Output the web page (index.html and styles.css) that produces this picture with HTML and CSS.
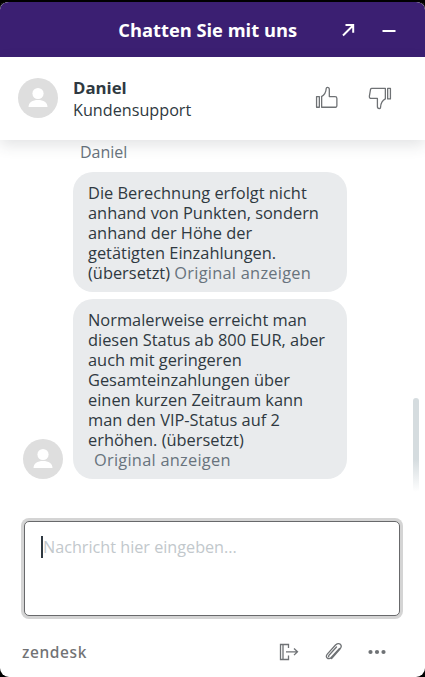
FILE: index.html
```html
<!DOCTYPE html>
<html lang="de">
<head>
<meta charset="utf-8">
<title>Chat</title>
<link rel="stylesheet" href="styles.css">
</head>
<body>
<div class="widget">
  <header class="topbar">
    <h1 class="topbar-title">Chatten Sie mit uns</h1>
    <div class="topbar-actions">
      <svg class="topbar-icon" width="16" height="16" viewBox="0 0 16 16"><path d="M3 13.5 13 3.5M5.5 3H13.2V10.7" fill="none" stroke="#fff" stroke-width="2"/></svg>
      <svg class="topbar-icon" width="16" height="16" viewBox="0 0 16 16"><path d="M1.5 9h13" fill="none" stroke="#fff" stroke-width="2"/></svg>
    </div>
  </header>
  <section class="agent">
    <div class="avatar">
      <svg width="40" height="40" viewBox="0 0 40 40"><circle cx="20" cy="15.5" r="5.6" fill="#fff"/><path d="M10.5 29c0-4.6 4-7 9.5-7s9.500 2.400 9.500 7z" fill="#fff"/></svg>
    </div>
    <div class="agent-info">
      <div class="agent-name">Daniel</div>
      <div class="agent-role">Kundensupport</div>
    </div>
    <div class="rating">
      <svg width="24" height="24" viewBox="0 0 26 26" fill="none" stroke="#6f7275" stroke-width="1.4" stroke-linejoin="round"><rect x="1.700" y="11.500" width="3" height="11.500"/><path d="M7.200 11.500v11.500h15.300c1 0 1.200-.8 1.200-1.500v-8c0-1.200-.8-2-2-2h-6.200V3.800c0-1.500-1-2.300-2-2.300-.7 0-1.300.5-1.400 1.400-.2 3.800-1.800 6.700-5.100 8.600z"/></svg>
      <svg width="24" height="24" viewBox="0 0 26 26" fill="none" stroke="#6f7275" stroke-width="1.4" stroke-linejoin="round"><rect x="21.300" y="2.500" width="3" height="11.500"/><path d="M18.800 14V2.500H4c-.7 0-1 .4-1.200 1L1.500 11c-.2 1.300.5 2.500 2 2.500h6.700v8.700c0 1.500 1 2.300 2 2.300.8 0 1.300-.5 1.400-1.400.2-4 1.500-7.200 5.200-9.100z"/></svg>
    </div>
  </section>
  <main class="log">
    <div class="log-inner">
      <div class="sender">Daniel</div>
      <div class="msg-row">
        <div class="avatar-slot"></div>
        <div class="bubble">Die Berechnung erfolgt nicht anhand von Punkten, sondern anhand der Höhe der getätigten Einzahlungen. (übersetzt) <span class="link">Original anzeigen</span></div>
      </div>
      <div class="msg-row">
        <div class="avatar-slot"><div class="avatar">
          <svg width="40" height="40" viewBox="0 0 40 40"><circle cx="20" cy="15.500" r="5.600" fill="#fff"/><path d="M10.500 29c0-4.600 4-7 9.500-7s9.500 2.400 9.500 7z" fill="#fff"/></svg>
        </div></div>
        <div class="bubble">Normalerweise erreicht man diesen Status ab 800 EUR, aber auch mit geringeren Gesamteinzahlungen über einen kurzen Zeitraum kann man den VIP-Status auf 2 erhöhen. (übersetzt)<br><span class="link link-block">Original anzeigen</span></div>
      </div>
    </div>
    <div class="scrollbar"></div>
  </main>
  <section class="composer">
    <div class="input"><span class="caret"></span><span class="placeholder">Nachricht hier eingeben...</span></div>
  </section>
  <footer class="footer">
    <span class="brand">zendesk</span>
    <div class="tools">
      <svg width="20" height="20" viewBox="0 0 20 20" fill="none" stroke="#6f7275" stroke-width="1.300"><path d="M9.500 6V2.500H1.500v15h8V13.500M1.500 2.500h2.500v15H1.500"/><path d="M7 9.800h11.500M15 6.500l3.500 3.300-3.500 3.300"/></svg>
      <svg width="20" height="20" viewBox="0 0 20 20" fill="none" stroke="#6f7275" stroke-width="1.300" stroke-linecap="round"><path d="M16.500 6.500 8.200 15.500c-1.300 1.400-3 1.500-4 .5s-1-2.700.3-4.100L12.500 3c1.500-1.600 3.600-1.900 4.800-.7s1 3.300-.5 4.900L8.600 16.500"/><path d="M13.500 5 6 13.200c-.6.700-.6 1.300-.2 1.700"/></svg>
      <svg width="20" height="20" viewBox="0 0 20 20" fill="#6f7275"><circle cx="3.500" cy="10" r="2.100"/><circle cx="10" cy="10" r="2.100"/><circle cx="16.500" cy="10" r="2.100"/></svg>
    </div>
  </footer>
</div>
</body>
</html>
```
FILE: styles.css
```css
* { box-sizing: border-box; }
html, body { margin: 0; height: 100%; background: #000; }
body { font-family: "Open Sans", "Noto Sans", sans-serif; color: #2f3941; overflow: hidden; }
.widget { height: 677px; width: 425px; background: #fff; border-radius: 9px; overflow: hidden; display: flex; flex-direction: column; border-top: 2px solid #000; }
.topbar { height: 55px; flex: none; background: #3b1f72; color: #fff; display: flex; align-items: center; justify-content: flex-end; padding: 0 28px 0 0; border-radius: 8px 8px 0 0; }
.topbar-title { margin: 0 43px 0 0; font-size: 18.300px; font-weight: 700; }
.topbar-actions { display: flex; gap: 25px; }
.topbar-icon { display: block; }
.agent { height: 83px; flex: none; display: flex; align-items: center; padding: 0 33px 2px 18px; background: #fff; box-shadow: 0 5px 14px rgba(47,57,65,.14); position: relative; z-index: 2; }
.avatar { width: 40px; height: 40px; border-radius: 50%; background: #dedede; flex: none; }
.avatar svg { display: block; }
.agent-info { margin: 2px 0 0 15px; flex: 1; line-height: 22px; font-size: 16.200px; }
.agent-name { font-weight: 700; font-size: 16.800px; }
.rating { display: flex; gap: 29px; }
.rating svg { display: block; }
.log { flex: 1; min-height: 0; position: relative; overflow: hidden; }
.log-inner { padding: 2px 78px 0 23px; display: flex; flex-direction: column; gap: 7px; }
.sender { margin: 0 0 3px 57px; font-size: 16px; line-height: 20px; color: #68737d; }
.msg-row { display: flex; align-items: flex-end; gap: 10px; }
.avatar-slot { width: 40px; flex: none; }
.bubble { flex: 1; background: #e9ebed; border-radius: 20px; padding: 11px 15px 9px; font-size: 16.400px; line-height: 20px; color: #2f3941; }
.link { color: #68737d; letter-spacing: .25px; }
.link-block { margin-left: 6px; }
.scrollbar { position: absolute; top: 258px; right: 6px; width: 6px; height: 94px; border-radius: 3px; background: linear-gradient(#d5dcdf 65%, #fff); }
.composer { flex: none; padding: 0 25px 0 24px; }
.input { height: 95px; border: 1px solid #68696b; border-radius: 5px; box-shadow: 0 0 0 3px #d4d4d4; padding: 14px 16px; font-size: 16.200px; line-height: 22px; position: relative; background: #fff; display: flex; align-items: flex-start; }
.caret { width: 2px; height: 22px; background: #2f3941; flex: none; }
.placeholder { color: #c2c8cc; }
.footer { height: 61px; flex: none; display: flex; align-items: center; justify-content: space-between; padding: 10px 38px 0 22px; }
.brand { font-family: "Noto Sans", sans-serif; font-weight: 500; font-size: 15.500px; color: #717274; letter-spacing: .6px; }
.tools { display: flex; gap: 24px; }
.tools svg { display: block; }
```
